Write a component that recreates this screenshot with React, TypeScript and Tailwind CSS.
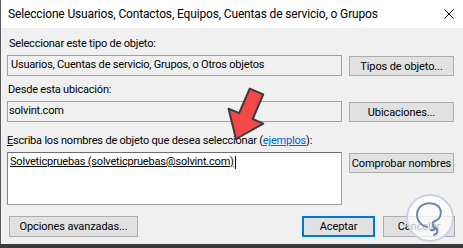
import React from 'react';

const font = { fontFamily: 'Roboto, "Noto Sans", "Liberation Sans", sans-serif' };

const Btn: React.FC<{ label: string; className?: string; primary?: boolean }> = ({ label, className = '', primary }) => (
    <div
        className={`flex items-center justify-center bg-[#e1e1e1] text-[11px] tracking-[-0.1px] text-black leading-none ${
            primary ? 'border-2 border-[#0078d7]' : 'border border-[#adadad]'
        } ${className}`}
    >
        {label}
    </div>
);

const Arrow = () => (
    <svg className="absolute left-0 top-0 pointer-events-none" width="463" height="248" viewBox="0 0 463 248">
        <polygon
            points="249.7,88.6 263.3,94.4 252.7,119 263.3,123.6 236,139 228.5,108.6 239.1,113.2"
            fill="#f24848"
            stroke="#3c3c3c"
            strokeWidth="2"
            strokeLinejoin="round"
        />
    </svg>
);

const Watermark = () => (
    <svg className="absolute left-[405px] top-[193px] pointer-events-none" width="50" height="50" viewBox="0 0 50 50">
        <circle cx="25" cy="25" r="23" fill="rgba(255,255,255,0.72)" stroke="#c9d3e6" strokeWidth="2" />
        <path
            d="M22 34 C14 32 10 24 13 17 C16 10 27 8 33 13 C38 18 36 26 30 28 C27 29 27 32 29 34 C31 36 28 38 26 37 M29 34 C33 36 34 40 29 42"
            fill="none"
            stroke="#6f86b4"
            strokeWidth="2"
            strokeLinecap="round"
        />
    </svg>
);

export default function App() {
    return (
        <div className="relative w-[463px] h-[248px] overflow-hidden bg-[#f0f0f0] flex flex-col" style={font}>
            {/* title bar */}
            <div className="h-[28px] bg-white flex items-center justify-between pl-[7px] pr-[7px] shrink-0 border-l border-[#5a5a5a]">
                <span className="text-[12px] tracking-[-0.15px] text-black">Seleccione Usuarios, Contactos, Equipos, Cuentas de servicio, o Grupos</span>
                <svg width="10" height="10" viewBox="0 0 10 10" className="mr-[2px]">
                    <path d="M0.5 0.5 L9.5 9.5 M9.5 0.5 L0.5 9.5" stroke="#000" strokeWidth="1" />
                </svg>
            </div>

            {/* body */}
            <div className="flex-1 flex flex-col pl-[6px] pr-[8px] border-l border-[#5a5a5a] text-[11px] tracking-[-0.2px] text-black">
                <div className="mt-[8px] h-[16px] leading-[16px] pl-[2px]">Seleccionar este tipo de objeto:</div>
                <div className="mt-[3px] flex items-start gap-[7px]">
                    <div className="w-[335px] h-[21px] border border-[#a0a0a0] bg-[#f0f0f0] flex items-center pl-[3px]">
                        Usuarios, Cuentas de servicio, Grupos, o Otros objetos
                    </div>
                    <Btn label="Tipos de objeto..." className="mt-[1px] w-[105px] h-[20px]" />
                </div>

                <div className="mt-[6px] h-[16px] leading-[16px] pl-[1px]">Desde esta ubicación:</div>
                <div className="mt-[3px] flex items-start gap-[7px]">
                    <div className="w-[335px] h-[21px] border border-[#a0a0a0] bg-[#f0f0f0] flex items-center pl-[1px]">
                        solvint.com
                    </div>
                    <Btn label="Ubicaciones..." className="mt-[1px] w-[105px] h-[20px]" />
                </div>

                <div className="mt-[11px] h-[16px] leading-[16px]">
                    <span className="underline">E</span>scriba los nombres de objeto que desea seleccionar (
                    <span className="text-[#0066cc] underline">ejemplos</span>):
                </div>
                <div className="mt-[3px] flex items-start gap-[7px]">
                    <div className="w-[335px] h-[53px] border border-[#a0a0a0] border-t-[#6e6e6e] border-l-[#828282] bg-white pl-[2px] pt-[1px]">
                        <span className="underline leading-[16px]">Solveticpruebas (solveticpruebas@solvint.com)</span>
                        <span className="inline-block w-[1px] h-[13px] bg-black align-middle ml-[1px]" />
                    </div>
                    <Btn label="Comprobar nombres" className="mt-[1px] w-[105px] h-[20px]" />
                </div>

                <div className="mt-[11px] flex items-start">
                    <Btn label="Opciones avanzadas..." className="ml-[2px] w-[129px] h-[21px]" />
                    <div className="flex-1" />
                    <Btn label="Aceptar" primary className="w-[73px] h-[21px]" />
                    <Btn label="Cancelar" className="ml-[8px] w-[72px] h-[21px]" />
                </div>
            </div>

            <div className="h-[4px] bg-[#3a3a3a] shrink-0" />

            <Arrow />
            <Watermark />
        </div>
    );
}
